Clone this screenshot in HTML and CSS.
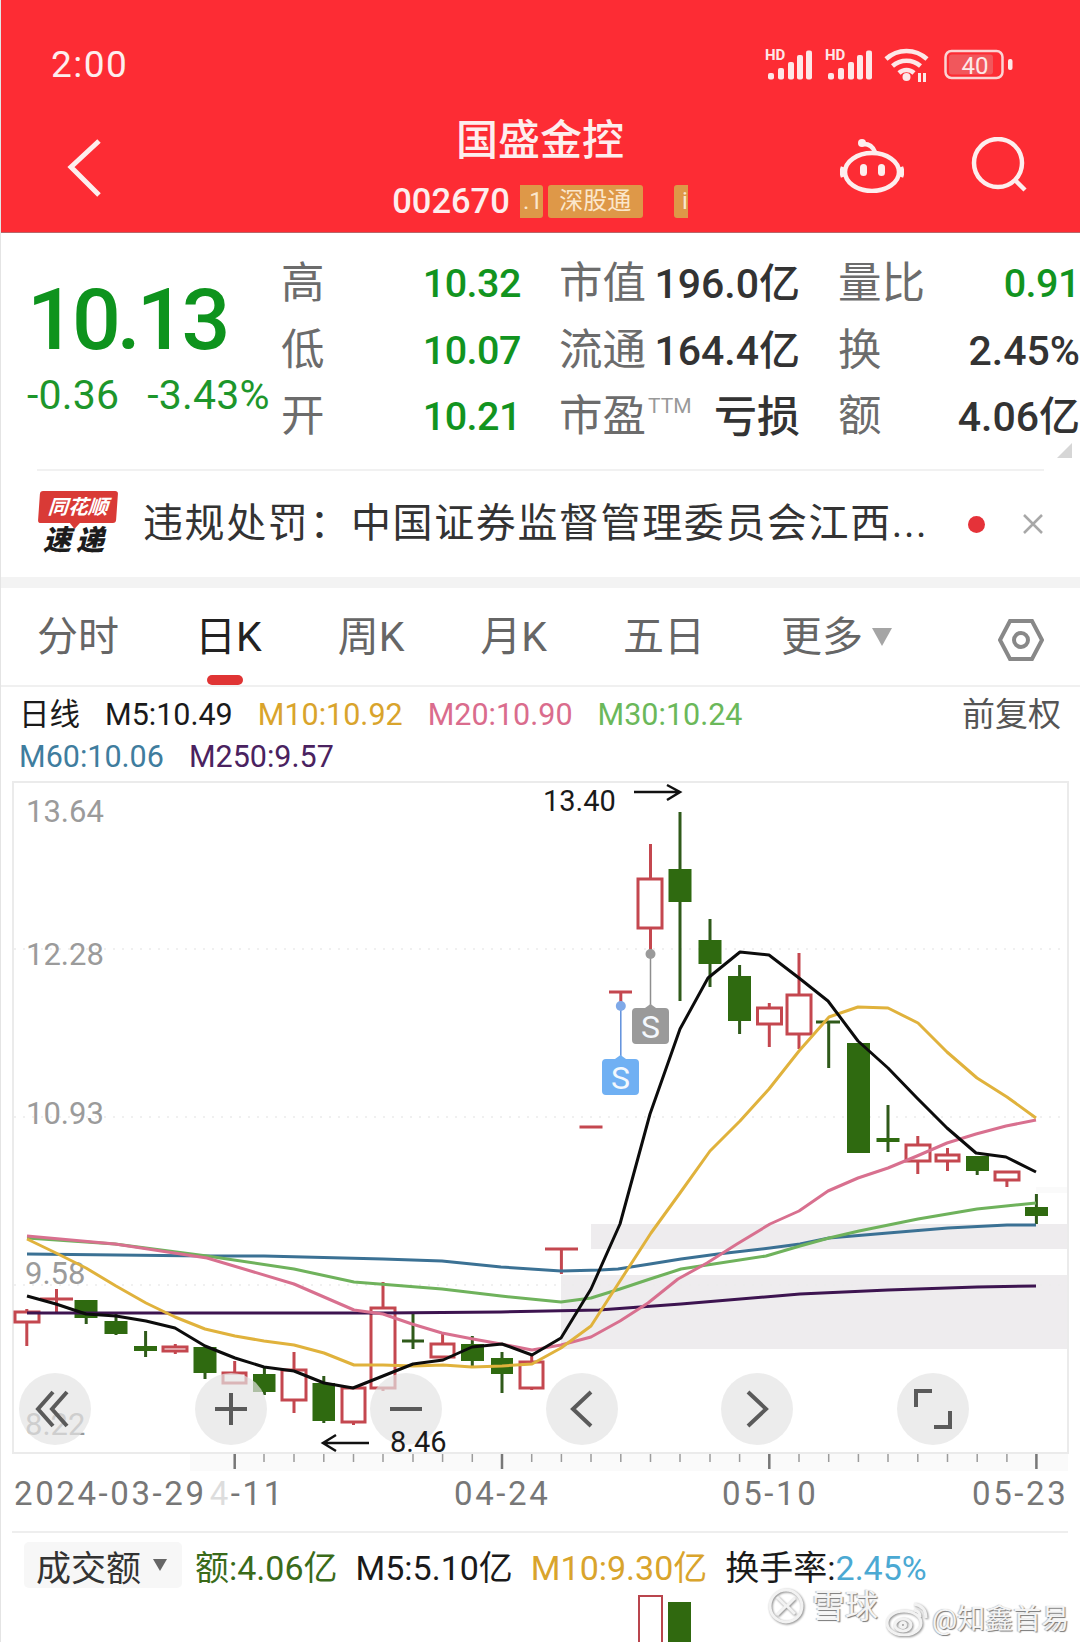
FILE: index.html
```html
<!DOCTYPE html>
<html lang="zh">
<head>
<meta charset="utf-8">
<title>国盛金控</title>
<link rel="stylesheet" href="styles.css">
</head>
<body>
<div class="page">
  <header class="appbar">
    <div class="status">
      <span class="time">2:00</span>
      <svg class="status-icons" viewBox="764 46 250 38" width="250" height="38">
        <g class="st-fill">
          <text class="st-hd" x="765" y="60">HD</text>
          <rect x="768" y="73" width="6" height="6.5" rx="2"/><rect x="778" y="68" width="6" height="11.5" rx="2"/><rect x="788" y="62" width="6" height="17.5" rx="2"/><rect x="797" y="55" width="6" height="24.5" rx="2"/><rect x="806" y="50.5" width="6" height="29" rx="2"/>
          <text class="st-hd" x="825" y="60">HD</text>
          <rect x="828" y="73" width="6" height="6.5" rx="2"/><rect x="838" y="68" width="6" height="11.5" rx="2"/><rect x="848" y="62" width="6" height="17.5" rx="2"/><rect x="857" y="55" width="6" height="24.5" rx="2"/><rect x="866" y="50.5" width="6" height="29" rx="2"/>
          <circle cx="906.5" cy="77" r="4"/>
          <rect x="918" y="73" width="3" height="9"/><rect x="923" y="73" width="3" height="9"/>
          <rect x="1008" y="59" width="4.5" height="11" rx="2"/>
        </g>
        <g class="st-stroke">
          <path d="M886 59 A30 30 0 0 1 927 59"/><path d="M892.5 66 A21 21 0 0 1 920.5 66"/><path d="M899 73 A11 11 0 0 1 914 73"/>
          <rect x="945.5" y="51" width="57" height="27" rx="6"/>
        </g>
        <rect class="st-batt" x="949" y="54.5" width="44" height="20" rx="3"/>
        <text class="st-batt-text" x="975" y="74">40</text>
      </svg>
    </div>
    <div class="nav">
      <svg class="nav-back" viewBox="0 0 36 60" width="36" height="60"><path d="M32 3 L4 29 L32 57"/></svg>
      <div class="nav-title">
        <h1 class="title">国盛金控</h1>
        <div class="code-row">
          <span class="code">002670</span>
          <span class="tag tag-cut">.1</span>
          <span class="tag tag-main">深股通</span>
          <span class="tag tag-stub">i</span>
        </div>
      </div>
      <div class="nav-actions">
        <svg class="icon-robot" viewBox="0 0 64 56" width="64" height="56">
          <circle class="robot-dot" cx="22" cy="6" r="4"/>
          <path d="M24 7 C30 7 33 10 35 15"/>
          <ellipse cx="32" cy="35" rx="27" ry="19"/>
          <path d="M3 30 Q1 35 3 40 M61 30 Q63 35 61 40"/>
          <rect class="robot-dot" x="20" y="27" width="7" height="12" rx="3.5"/>
          <rect class="robot-dot" x="38" y="27" width="7" height="12" rx="3.5"/>
        </svg>
        <svg class="icon-search" viewBox="0 0 60 58" width="60" height="58">
          <circle cx="27" cy="26" r="24"/>
          <path d="M45 44 L54 53"/>
        </svg>
      </div>
    </div>
  </header>

  <section class="quote">
    <div class="price-box">
      <div class="price">10.13</div>
      <div class="delta"><span>-0.36</span><span>-3.43%</span></div>
    </div>
    <div class="quote-grid">
      <div class="cell"><span class="lab">高</span><span class="val-g">10.32</span></div>
      <div class="cell"><span class="lab">市值</span><span class="val">196.0亿</span></div>
      <div class="cell"><span class="lab">量比</span><span class="val-g">0.91</span></div>
      <div class="cell"><span class="lab">低</span><span class="val-g">10.07</span></div>
      <div class="cell"><span class="lab">流通</span><span class="val">164.4亿</span></div>
      <div class="cell"><span class="lab">换</span><span class="val">2.45%</span></div>
      <div class="cell"><span class="lab">开</span><span class="val-g">10.21</span></div>
      <div class="cell"><span class="lab">市盈<sup class="ttm">TTM</sup></span><span class="val val-cjk">亏损</span></div>
      <div class="cell"><span class="lab">额</span><span class="val">4.06亿</span></div>
    </div>
    <span class="corner"></span>
  </section>

  <section class="news">
    <div class="news-logo">
      <span class="bubble">同花顺</span>
      <span class="express">速递</span>
    </div>
    <p class="news-text">违规处罚：中国证券监督管理委员会江西...</p>
    <span class="news-dot"></span>
    <svg class="news-close" viewBox="0 0 20 20" width="20" height="20"><path d="M1 1 L19 19 M19 1 L1 19"/></svg>
  </section>

  <nav class="tabs">
    <div class="tab-list">
      <span class="tab">分时</span>
      <span class="tab tab-on">日K</span>
      <span class="tab">周K</span>
      <span class="tab">月K</span>
      <span class="tab">五日</span>
      <span class="tab tab-more">更多<i class="caret"></i></span>
    </div>
    <svg class="tab-hex" viewBox="0 0 46 44" width="46" height="44"><path d="M12 3 H34 L44 22 L34 41 H12 L2 22 Z"/><circle cx="23" cy="22" r="7"/></svg>
  </nav>

  <section class="legend">
    <div class="legend-row">
      <span class="c-k">日线</span>
      <span class="c-k">M5:10.49</span>
      <span class="c-y">M10:10.92</span>
      <span class="c-p">M20:10.90</span>
      <span class="c-g">M30:10.24</span>
      <span class="adjust">前复权</span>
    </div>
    <div class="legend-row">
      <span class="c-b">M60:10.06</span>
      <span class="c-v">M250:9.57</span>
    </div>
  </section>

  <section class="chart">
    <svg class="chart-svg" viewBox="0 780 1080 690" width="1080" height="690">
      <rect class="patch" x="591" y="1223" width="477" height="25"/>
      <rect class="patch" x="561" y="1274" width="507" height="74"/>
      <rect class="patch-pale" x="1036" y="1186" width="32" height="6"/>
      <rect class="patch-pale" x="190" y="1453" width="878" height="34"/>
      <rect class="frame" x="13" y="781" width="1055" height="671"/>
      <line class="grid" x1="14" x2="1067" y1="948" y2="948"/>
      <line class="grid" x1="14" x2="1067" y1="1116" y2="1116"/>
      <line class="grid" x1="14" x2="1067" y1="1284" y2="1284"/>

      <text class="axis" x="26" y="821">13.64</text>
      <text class="axis" x="26" y="964">12.28</text>
      <text class="axis" x="26" y="1123">10.93</text>
      <text class="axis" x="25" y="1283">9.58</text>
      <text class="axis" x="25" y="1434">8.22</text>

      <g class="ticks">
        <path d="M264 1453V1461M294 1453V1461M323.8 1453V1461M353.5 1453V1461M383 1453V1461M413 1453V1461M442.6 1453V1461M472.3 1453V1461M531.7 1453V1461M561.4 1453V1461M591 1453V1461M620.8 1453V1461M650.5 1453V1461M680 1453V1461M710 1453V1461M739.6 1453V1461M799 1453V1461M828.7 1453V1461M858.4 1453V1461M888 1453V1461M917.8 1453V1461M947.5 1453V1461M977.2 1453V1461M1006.9 1453V1461"/>
        <path class="tick-major" d="M234.7 1453V1468M502 1453V1468M769.3 1453V1468M1036.4 1453V1468"/>
      </g>

      <g class="up">
        <path d="M26.8 1308V1345M56.5 1288V1312M40 1298H73M175.3 1343V1353M234.7 1360V1372M294 1351V1412M353.5 1421V1424M383 1281V1390M442.6 1332V1343M531.7 1353V1389M545 1248H578M561.4 1248V1273M579.5 1126H602.5M609 991H632M620.8 991V1005M650.5 843V953M769.3 1002V1046M799 952V1048M917.8 1135V1173M947.5 1147V1170M1006.9 1179V1186"/>
        <rect x="15" y="1311" width="24" height="10"/>
        <rect x="163" y="1346" width="24" height="4"/>
        <rect x="223" y="1372" width="23" height="10"/>
        <rect x="282" y="1369" width="24" height="30"/>
        <rect x="342" y="1387" width="23" height="34"/>
        <rect x="371" y="1307" width="24" height="80"/>
        <rect x="431" y="1343" width="23" height="13"/>
        <rect x="520" y="1361" width="23" height="26"/>
        <rect x="638" y="878" width="24" height="49"/>
        <rect x="757.5" y="1007" width="24" height="16"/>
        <rect x="787" y="994" width="24" height="39"/>
        <rect x="906" y="1144" width="24" height="16"/>
        <rect x="936" y="1154" width="23" height="6"/>
        <rect x="995" y="1171" width="24" height="8"/>
      </g>
      <g class="down">
        <path d="M116 1313V1334M145.6 1330V1356M205 1372V1378M264.4 1366V1394M323.8 1375V1422M413 1312V1348M402 1340H424M472.3 1335V1365M502 1351V1392M680 811V1000M710 918V986M739.6 964V1033M816 1021H840M828.7 1021V1067M888 1104V1151M977.2 1170V1174M1036.4 1193V1223M86.2 1317V1323"/>
        <rect x="74.5" y="1299" width="23" height="18"/>
        <rect x="104.5" y="1320" width="23" height="13"/>
        <rect x="134" y="1345" width="23" height="5"/>
        <rect x="193.5" y="1346" width="23" height="26"/>
        <rect x="253" y="1373" width="22.5" height="18"/>
        <rect x="312.5" y="1382" width="22.5" height="38"/>
        <rect x="461" y="1343" width="23" height="17"/>
        <rect x="491" y="1357" width="22" height="16"/>
        <rect x="668.5" y="868" width="23" height="33"/>
        <rect x="698.5" y="939" width="23" height="24"/>
        <rect x="728" y="975" width="23" height="45"/>
        <rect x="847" y="1042" width="23" height="110"/>
        <rect x="876.5" y="1137" width="23" height="4"/>
        <rect x="966" y="1155" width="23" height="15"/>
        <rect x="1025" y="1206" width="23" height="9"/>
      </g>

      <polyline class="ma ma-v" points="27,1312 383,1312 501,1311 599,1309 681,1303 800,1293 888,1289 977,1286 1036,1285"/>
      <polyline class="ma ma-b" points="27,1253 207,1255 264,1255 383,1258 442,1260 501,1266 561,1270 600,1269 618,1268 650,1263 681,1258 718,1253 770,1247 800,1243 829,1237 888,1232 948,1227 1007,1224 1036,1224"/>
      <polyline class="ma ma-g" points="27,1237 115,1243 207,1255 294,1268 354,1281 442,1288 501,1295 561,1301 591,1297 620,1288 650,1278 681,1268 766,1255 800,1245 829,1237 859,1230 918,1218 977,1208 1036,1202"/>
      <polyline class="ma ma-p" points="27,1235 115,1243 207,1257 294,1283 354,1309 383,1313 412,1323 442,1332 473,1338 501,1343 532,1349 561,1344 591,1336 620,1320 648,1302 678,1278 707,1262 737,1243 770,1223 799,1210 828,1190 858,1177 888,1167 917,1155 947,1142 976,1133 1006,1125 1036,1119"/>
      <polyline class="ma ma-y" points="27,1238 56,1252 86,1267 116,1285 146,1302 175,1316 205,1328 235,1335 264,1340 294,1344 324,1352 354,1364 383,1364 413,1365 443,1364 472,1366 502,1365 532,1363 561,1347 591,1325 620,1280 651,1232 680,1192 710,1150 740,1120 769,1088 799,1050 829,1016 858,1006 888,1007 918,1022 947,1051 977,1077 1007,1096 1036,1117"/>
      <polyline class="ma ma-k" points="27,1295 56,1303 86,1313 116,1315 146,1320 175,1327 205,1345 235,1357 264,1366 294,1370 324,1382 353,1387 383,1375 413,1363 443,1359 472,1346 502,1343 532,1354 561,1337 591,1288 620,1223 650,1113 680,1028 708,977 740,951 769,954 799,977 828,1000 858,1040 888,1067 917,1097 947,1127 976,1152 1006,1156 1036,1171"/>

      <g class="sig-blue">
        <line x1="620.8" y1="1005" x2="620.8" y2="1056"/>
        <circle cx="620.8" cy="1005" r="5"/>
        <path class="sig-tag" d="M606 1058 H615 L620.5 1054 L626 1058 H635 Q639 1058 639 1062 V1090 Q639 1094 635 1094 H606 Q602 1094 602 1090 V1062 Q602 1058 606 1058 Z"/>
        <text class="sig-s" x="620.5" y="1088">S</text>
      </g>
      <g class="sig-gray">
        <line x1="650.5" y1="953" x2="650.5" y2="1004"/>
        <circle cx="650.5" cy="953" r="5"/>
        <path class="sig-tag" d="M636 1007 H645 L650.5 1003 L656 1007 H665 Q669 1007 669 1011 V1039 Q669 1043 665 1043 H636 Q632 1043 632 1039 V1011 Q632 1007 636 1007 Z"/>
        <text class="sig-s" x="650.5" y="1037">S</text>
      </g>

      <text class="mark" x="543" y="810">13.40</text>
      <path class="arrow" d="M634 791 H680 M667 784 L680 791 L667 799"/>
    </svg>

    <div class="ctrl-row">
      <button class="ctrl"><svg viewBox="0 0 40 40" width="40" height="40"><path d="M18 3 L3 20 L18 37 M32 3 L17 20 L32 37"/></svg></button>
      <button class="ctrl"><svg viewBox="0 0 40 40" width="40" height="40"><path d="M4 20 H36 M20 4 V36"/></svg></button>
      <button class="ctrl"><svg viewBox="0 0 40 40" width="40" height="40"><path d="M4 20 H36"/></svg></button>
      <button class="ctrl"><svg viewBox="0 0 40 40" width="40" height="40"><path d="M29 3 L11 20 L29 37"/></svg></button>
      <button class="ctrl"><svg viewBox="0 0 40 40" width="40" height="40"><path d="M11 3 L29 20 L11 37"/></svg></button>
      <button class="ctrl"><svg viewBox="0 0 40 40" width="40" height="40"><path d="M3 18 V2 H19 M37 22 V38 H21"/></svg></button>
    </div>

    <svg class="low-mark" viewBox="320 1425 132 32" width="132" height="32">
      <text class="mark" x="390" y="1451">8.46</text>
      <path class="arrow" d="M369 1442 H323 M336 1434 L323 1442 L336 1450"/>
    </svg>
  </section>

  <div class="dates">
    <div class="dates-left"><span>2024-03-29</span><span class="date-next"><i class="fade">4</i>-11</span></div>
    <span class="date-b">04-24</span>
    <span class="date-c">05-10</span>
    <span class="date-d">05-23</span>
  </div>

  <section class="volume">
    <div class="vol-head">
      <div class="vol-pick">成交额<i class="caret caret-dark"></i></div>
      <span class="c-dg">额:4.06亿</span>
      <span class="c-k">M5:5.10亿</span>
      <span class="c-y">M10:9.30亿</span>
      <span class="c-k">换手率:<b class="c-sky">2.45%</b></span>
    </div>
    <svg class="vol-bars" viewBox="0 1590 1080 52" width="1080" height="52">
      <rect class="vol-up" x="639" y="1595" width="23" height="50"/>
      <rect class="vol-down" x="668" y="1601" width="23" height="45"/>
    </svg>
    <div class="watermark">
      <svg class="wm-logo" viewBox="0 0 36 36" width="36" height="36"><circle cx="18" cy="18" r="16"/><path d="M9 9 L18 18 L9 27 M27 10 L19 18 L27 26"/></svg>
      <span class="wm-xq">雪球</span>
      <svg class="wm-weibo" viewBox="0 0 44 36" width="44" height="36"><ellipse cx="18" cy="23" rx="17" ry="12"/><ellipse cx="17" cy="25" rx="8" ry="6"/><circle cx="17" cy="25" r="2.5"/><path d="M28 4 Q40 6 40 18 M28 10 Q34 11 34 17"/></svg>
      <span class="wm-user">@知鑫首易</span>
    </div>
  </section>
</div>
</body>
</html>
```
FILE: styles.css
```css
* { box-sizing: border-box; margin: 0; padding: 0; }
html, body { background: #fff; }
body { width: 1080px; height: 1642px; overflow: hidden; font-family: Roboto, "Noto Sans CJK SC", sans-serif; color: #333; }
.page { width: 1080px; height: 1642px; border-left: 1px solid #e4e4e4; overflow: hidden; position: relative; }

/* app bar */
.appbar { width: 1080px; height: 233px; margin-left: -1px; background: #fd2c34; border-bottom: 1px solid #b8676a; color: #fdeeee; }
.status { height: 100px; display: flex; justify-content: space-between; align-items: flex-start; padding: 46px 66px 0 51px; }
.time { font-size: 37px; line-height: 38px; letter-spacing: 1.5px; }
.st-fill { fill: #fde8e8; }
.st-hd { font: 700 15px Roboto, sans-serif; }
.st-stroke { fill: none; stroke: #fde8e8; stroke-width: 4.5px; }
.st-stroke rect { stroke-width: 2.5px; stroke: #fbd4d4; }
.st-batt { fill: #f1575c; }
.st-batt-text { font: 400 24px Roboto, sans-serif; fill: #fde8e8; text-anchor: middle; }
.nav { height: 132px; display: grid; grid-template-columns: 1fr auto 1fr; align-items: start; }
.nav-back { fill: none; stroke: #fdeeee; stroke-width: 5px; margin: 38px 0 0 67px; }
.nav-title { display: flex; flex-direction: column; align-items: center; }
.title { font-size: 42px; font-weight: 500; line-height: 60px; margin-top: 11px; }
.code-row { display: flex; align-items: center; margin-top: 11px; height: 38px; }
.code { font-size: 34.5px; line-height: 38px; font-weight: 500; margin-right: 10px; }
.tag { height: 33px; border-radius: 3px; background: #de9848; color: #fbe7cc; font-size: 24px; line-height: 33px; margin-right: 5px; }
.tag-main { width: 95px; text-align: center; }
.tag-cut { width: 23px; text-align: right; border-radius: 0 3px 3px 0; }
.tag-stub { width: 14px; margin: 0 0 0 26px; text-align: right; border-radius: 3px 0 0 3px; }
.nav-actions { display: flex; justify-self: end; gap: 67px; margin: 37px 49px 0 0; }
.icon-robot, .icon-search { fill: none; stroke: #fdeeee; stroke-width: 4.5px; }
.robot-dot { fill: #fdeeee; stroke: none; }

/* quote block */
.quote { height: 236px; display: flex; position: relative; }
.price-box { width: 280px; }
.price { font-size: 86px; line-height: 86px; font-weight: 500; letter-spacing: -4px; color: #0e931d; margin: 44px 0 0 26px; }
.delta { display: flex; gap: 28px; margin: 10px 0 0 26px; font-size: 41px; line-height: 44px; letter-spacing: .2px; color: #1d962b; }
.quote-grid { display: grid; grid-template-columns: 240px 241px 242px; grid-auto-rows: 66.5px; column-gap: 38px; padding-top: 18px; }
.cell { display: flex; justify-content: space-between; align-items: center; }
.lab { font-size: 43.5px; line-height: 50px; color: #6c6c6c; position: relative; white-space: nowrap; }
.val-g { font-size: 39.5px; line-height: 50px; font-weight: 500; color: #12941f; letter-spacing: -.5px; }
.val { font-size: 41px; line-height: 50px; font-weight: 500; color: #333; letter-spacing: 0; white-space: nowrap; }
.val-cjk { font-size: 43px; }
.ttm { position: absolute; left: 89px; top: 4px; font-size: 21px; line-height: 20px; color: #999; }
.corner { position: absolute; right: 8px; bottom: 11px; width: 0; height: 0; border-style: solid; border-width: 0 0 15px 15px; border-color: transparent transparent #d6d6d6 transparent; }

/* news banner */
.news { height: 108px; margin: 0 36px; border-top: 2px solid #f1f1f1; display: flex; align-items: center; }
.news-logo { width: 80px; display: flex; flex-direction: column; align-items: center; margin: -2px 0 0 1px; }
.bubble { position: relative; width: 78px; height: 32px; border-radius: 3px; background: #d93a36; color: #fff; font-size: 20px; line-height: 32px; font-weight: 700; font-style: italic; text-align: center; transform: skewX(-4deg); }
.bubble::after { content: ""; position: absolute; left: 32px; top: 32px; border: 5px solid transparent; border-top: 6px solid #d93a36; }
.express { font-size: 28px; line-height: 30px; font-weight: 900; font-style: italic; color: #1c1c1c; letter-spacing: 5px; margin: 3px 0 0 -4px; }
.news-text { flex: 1; margin-left: 25px; font-size: 40px; line-height: 50px; color: #333; letter-spacing: 1.6px; white-space: nowrap; }
.news-dot { width: 17px; height: 17px; border-radius: 50%; background: #e53239; margin-right: 38px; }
.news-close { fill: none; stroke: #a8a8a8; stroke-width: 2.5px; margin-right: 1px; }

/* tabs */
.tabs { height: 99px; margin-top: 11px; border-bottom: 2px solid #f0f0f0; display: flex; align-items: flex-start; padding: 25px 36px 0 36px; justify-content: space-between; position: relative; }
.tabs::before { content: ""; position: absolute; left: -1px; right: 0; top: -11px; height: 11px; background: #f3f3f3; }
.tab-list { width: 855px; display: flex; justify-content: space-between; }
.tab { font-size: 41px; line-height: 48px; color: #666; position: relative; }
.tab-on { color: #222; }
.tab-on::after { content: ""; position: absolute; left: 12px; top: 62px; width: 36px; height: 10px; border-radius: 5px; background: #e03434; }
.tab-more { display: flex; align-items: center; gap: 9px; }
.caret { display: inline-block; width: 0; height: 0; border-style: solid; border-width: 18px 10px 0; border-color: #a5a5a5 transparent transparent; }
.tab-hex { fill: none; stroke: #888; stroke-width: 4px; margin-top: 5px; }

/* legend */
.legend { height: 94px; padding: 7px 19px 0 18px; }
.legend-row { display: flex; gap: 25px; height: 42px; align-items: center; font-size: 30.5px; line-height: 42px; }
.adjust { margin-left: auto; color: #555; font-size: 33px; }
.c-k { color: #1a1a1a; }
.c-y { color: #d9a42c; }
.c-p { color: #da6c8d; }
.c-g { color: #6bb85a; }
.c-b { color: #3f7d9e; }
.c-v { color: #4a2260; }
.c-dg { color: #3a6b1a; }
.c-sky { color: #4ba9d3; font-weight: 400; }

/* chart */
.chart { height: 690px; position: relative; margin-left: -1px; }
.chart-svg { display: block; }
.patch { fill: #eeecee; }
.patch-pale { fill: #fafafa; }
.frame { fill: none; stroke: #ebebeb; stroke-width: 2px; }
.grid { stroke: #ebebeb; stroke-width: 1.5px; stroke-dasharray: 2 7; }
.axis { font: 400 31px Roboto, sans-serif; fill: #9b9b9b; }
.ticks path { stroke: #9c9c9c; stroke-width: 1.5px; fill: none; }
.ticks .tick-major { stroke: #777; stroke-width: 2.5px; }
.up { fill: none; stroke: #c4474f; stroke-width: 3px; }
.up rect { fill: #fff; }
.down { fill: #2f6a10; stroke: none; }
.down path { stroke: #2f5a1a; stroke-width: 3px; fill: none; }
.ma { fill: none; stroke-width: 3px; stroke-linejoin: round; }
.ma-k { stroke: #0c0c0c; }
.ma-y { stroke: #e0b23c; }
.ma-p { stroke: #d8708f; }
.ma-g { stroke: #6fb25c; }
.ma-b { stroke: #3b7194; }
.ma-v { stroke: #3d1450; }
.sig-blue { stroke: #5f8fdc; fill: #7fa9e8; }
.sig-gray { stroke: #8e8e8e; fill: #9a9a9a; }
.sig-blue line, .sig-gray line { stroke-width: 1.5px; }
.sig-blue circle, .sig-gray circle { stroke: none; }
.sig-blue .sig-tag { stroke: none; fill: #70b0f3; }
.sig-gray .sig-tag { stroke: none; fill: #9a9a9a; }
.sig-s { stroke: none; fill: #f4f8fd; font: 400 32px Roboto, sans-serif; text-anchor: middle; }
.mark { font: 400 29px Roboto, sans-serif; fill: #1a1a1a; }
.arrow { fill: none; stroke: #111; stroke-width: 2.5px; }
.ctrl-row { position: absolute; left: 19px; top: 592px; width: 950px; display: flex; justify-content: space-between; }
.ctrl { width: 72px; height: 72px; border: 0; border-radius: 50%; background: rgba(228, 228, 228, .7); display: flex; align-items: center; justify-content: center; }
.ctrl svg { fill: none; stroke: #5a5a5a; stroke-width: 4px; }
.low-mark { position: absolute; left: 320px; top: 645px; }

/* date axis */
.dates { height: 60px; margin-left: -1px; display: flex; font-size: 33px; line-height: 40px; color: #777; letter-spacing: 2.6px; padding: 3px 0 0 14px; }
.dates-left { width: 440px; display: flex; }
.date-next { margin-left: 3px; }
.fade { font-style: normal; color: #ddd; }
.date-b { width: 268px; }
.date-c { width: 250px; }

/* volume */
.volume { height: 113px; border-top: 2px solid #eee; margin: 0 12px 0 11px; position: relative; }
.vol-head { display: flex; align-items: center; gap: 18px; margin: 9px 0 0 12px; height: 46px; font-size: 34px; white-space: nowrap; }
.vol-pick { width: 158px; height: 46px; margin-right: -5px; background: #f7f7f7; border-radius: 5px; display: flex; align-items: center; gap: 12px; padding-left: 12px; font-size: 35px; color: #333; }
.caret-dark { border-width: 12px 7px 0; border-color: #666 transparent transparent; }
.vol-bars { position: absolute; left: -12px; top: 58px; display: block; }
.vol-up { fill: #fff; stroke: #b9454d; stroke-width: 2px; }
.vol-down { fill: #30690f; }
.watermark { position: absolute; left: 756px; top: 54px; width: 312px; height: 52px; display: flex; align-items: center; color: #fff; }
.wm-logo, .wm-weibo { fill: none; stroke: #f2f2f2; stroke-width: 3px; flex: none; filter: drop-shadow(1px 1px 1px #888); }
.wm-logo { margin-top: -14px; }
.wm-xq { margin: -12px 0 0 8px; font-size: 33px; line-height: 40px; color: #f4f4f4; text-shadow: 1px 1px 1px #777, -1px 0 1px #bbb; }
.wm-weibo { margin: 10px 0 0 8px; }
.wm-user { margin: 14px 0 0 2px; font-size: 28px; line-height: 34px; color: #f4f4f4; text-shadow: 1px 1px 1px #777, -1px 0 1px #bbb; }
```
